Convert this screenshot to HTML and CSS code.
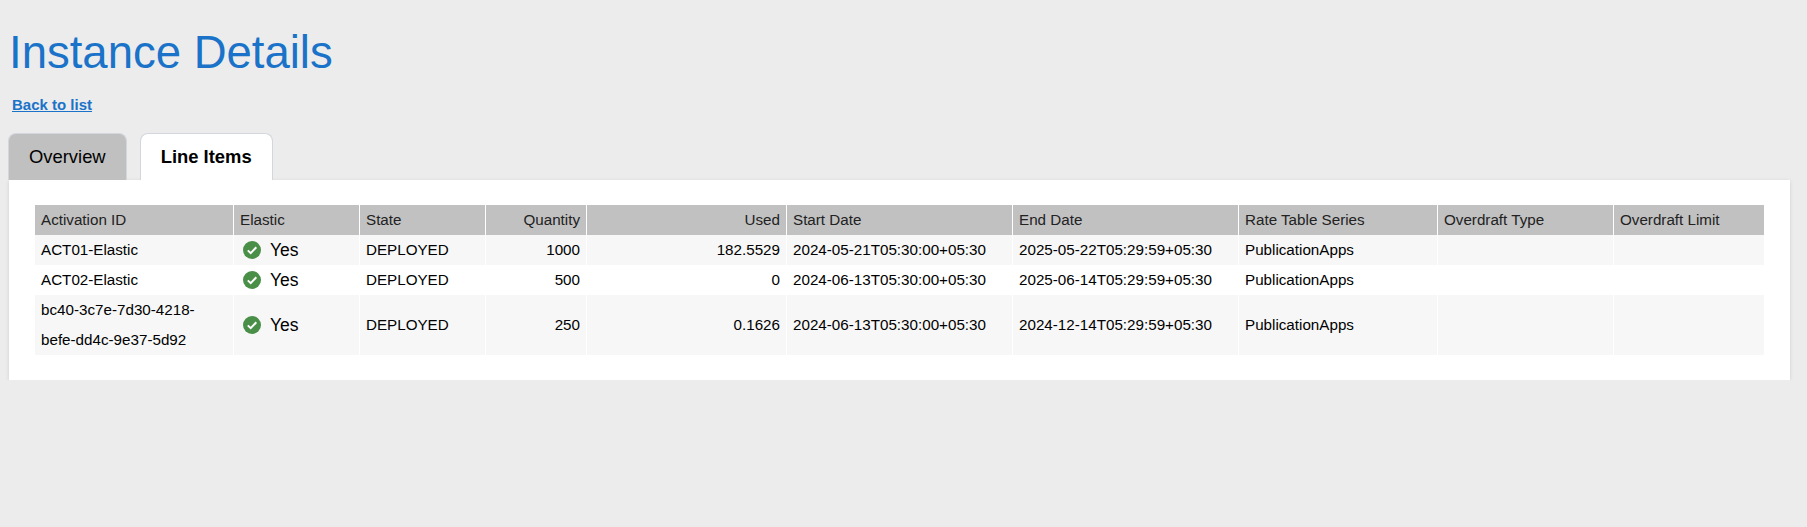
FILE: index.html
```html
<!DOCTYPE html>
<html lang="en">

<head>
    <meta charset="UTF-8">
    <meta name="viewport" content="width=device-width, initial-scale=1.0">
    <title>Instance Details</title>

    <link rel="stylesheet" href="styles.css">
</head>

<body>
    <h1>Instance Details</h1>
    <a class="back-link" href="#list">Back to list</a>

    <div class="tabs">
        <a class="tab" href="#overview">Overview</a>
        <a class="tab active" href="#items">Line Items</a>
    </div>

    <div class="panel">
        <table>
            <colgroup>
                <col class="col-id">
                <col class="col-elastic">
                <col class="col-state">
                <col class="col-qty">
                <col class="col-used">
                <col class="col-start">
                <col class="col-end">
                <col class="col-rate">
                <col class="col-type">
                <col class="col-limit">
            </colgroup>
            <thead>
                <tr>
                    <th>Activation ID</th>
                    <th>Elastic</th>
                    <th>State</th>
                    <th class="num">Quantity</th>
                    <th class="num">Used</th>
                    <th>Start Date</th>
                    <th>End Date</th>
                    <th>Rate Table Series</th>
                    <th>Overdraft Type</th>
                    <th>Overdraft Limit</th>
                </tr>
            </thead>
            <tbody>
                <tr>
                    <td>ACT01-Elastic</td>
                    <td>
                        <span class="yes">
                            <svg class="check" viewBox="0 0 18 18"><circle cx="9" cy="9" r="9" fill="#4a8f47"/><path d="M4.8 9.4l2.9 2.8 5.6-5.9" fill="none" stroke="#fff" stroke-width="2"/></svg>
                            Yes
                        </span>
                    </td>
                    <td>DEPLOYED</td>
                    <td class="num">1000</td>
                    <td class="num">182.5529</td>
                    <td>2024-05-21T05:30:00+05:30</td>
                    <td>2025-05-22T05:29:59+05:30</td>
                    <td>PublicationApps</td>
                    <td></td>
                    <td></td>
                </tr>
                <tr>
                    <td>ACT02-Elastic</td>
                    <td>
                        <span class="yes">
                            <svg class="check" viewBox="0 0 18 18"><circle cx="9" cy="9" r="9" fill="#4a8f47"/><path d="M4.8 9.4l2.9 2.8 5.6-5.9" fill="none" stroke="#fff" stroke-width="2"/></svg>
                            Yes
                        </span>
                    </td>
                    <td>DEPLOYED</td>
                    <td class="num">500</td>
                    <td class="num">0</td>
                    <td>2024-06-13T05:30:00+05:30</td>
                    <td>2025-06-14T05:29:59+05:30</td>
                    <td>PublicationApps</td>
                    <td></td>
                    <td></td>
                </tr>
                <tr>
                    <td>bc40-3c7e-7d30-4218-<br>befe-dd4c-9e37-5d92</td>
                    <td>
                        <span class="yes">
                            <svg class="check" viewBox="0 0 18 18"><circle cx="9" cy="9" r="9" fill="#4a8f47"/><path d="M4.8 9.4l2.9 2.8 5.6-5.9" fill="none" stroke="#fff" stroke-width="2"/></svg>
                            Yes
                        </span>
                    </td>
                    <td>DEPLOYED</td>
                    <td class="num">250</td>
                    <td class="num">0.1626</td>
                    <td>2024-06-13T05:30:00+05:30</td>
                    <td>2024-12-14T05:29:59+05:30</td>
                    <td>PublicationApps</td>
                    <td></td>
                    <td></td>
                </tr>
            </tbody>
        </table>
    </div>
</body>

</html>
```

FILE: styles.css
```css
body {
    font-family: "Liberation Sans", Arial, sans-serif;
    margin: 0;
    padding: 0 17px 0 9px;
    background-color: #ececec;
    color: #000;
}

h1 {
    margin: 0;
    padding-top: 27px;
    font-size: 45.5px;
    line-height: 52px;
    font-weight: normal;
    color: #1a73c8;
}

.back-link {
    display: block;
    width: fit-content;
    margin: 16px 0 0 3px;
    font-size: 15px;
    line-height: 20px;
    font-weight: bold;
    color: #1a73c8;
}

.tabs {
    display: flex;
    gap: 13px;
    margin: 18px 0 0 -1px;
}

.tab {
    height: 47px;
    box-sizing: border-box;
    padding: 0 20px;
    border: 1px solid #d3d6dc;
    border-bottom: none;
    border-radius: 8px 8px 0 0;
    background: #c0c0c0;
    font-size: 18.4px;
    line-height: 45px;
    color: #000;
    text-decoration: none;
}

.tab.active {
    background: #fff;
    font-weight: bold;
}

.panel {
    padding: 25px 26px;
    background: #fff;
    box-shadow: 0 1px 4px rgba(0, 0, 0, 0.12);
}

table {
    width: 100%;
    table-layout: fixed;
    border-collapse: separate;
    border-spacing: 0;
    font-size: 15.2px;
    line-height: 30px;
}

th,
td {
    padding: 0 6px;
    border-right: 1px solid #fff;
    text-align: left;
    vertical-align: middle;
}

th {
    background-color: #c1c1c1;
    font-weight: normal;
    color: #222;
}

th:last-child,
td:last-child {
    border-right: none;
}

tbody tr:nth-child(odd) td {
    background-color: #f7f7f7;
}

th.num,
td.num {
    text-align: right;
}

.yes {
    display: flex;
    align-items: center;
    gap: 9px;
    padding-left: 3px;
    font-size: 17.5px;
}

.check {
    width: 18px;
    height: 18px;
    flex-shrink: 0;
}

.col-id { width: 199px; }
.col-elastic { width: 126px; }
.col-state { width: 126px; }
.col-qty { width: 101px; }
.col-used { width: 200px; }
.col-start { width: 226px; }
.col-end { width: 226px; }
.col-rate { width: 199px; }
.col-type { width: 176px; }
.col-limit { width: 150px; }
```
